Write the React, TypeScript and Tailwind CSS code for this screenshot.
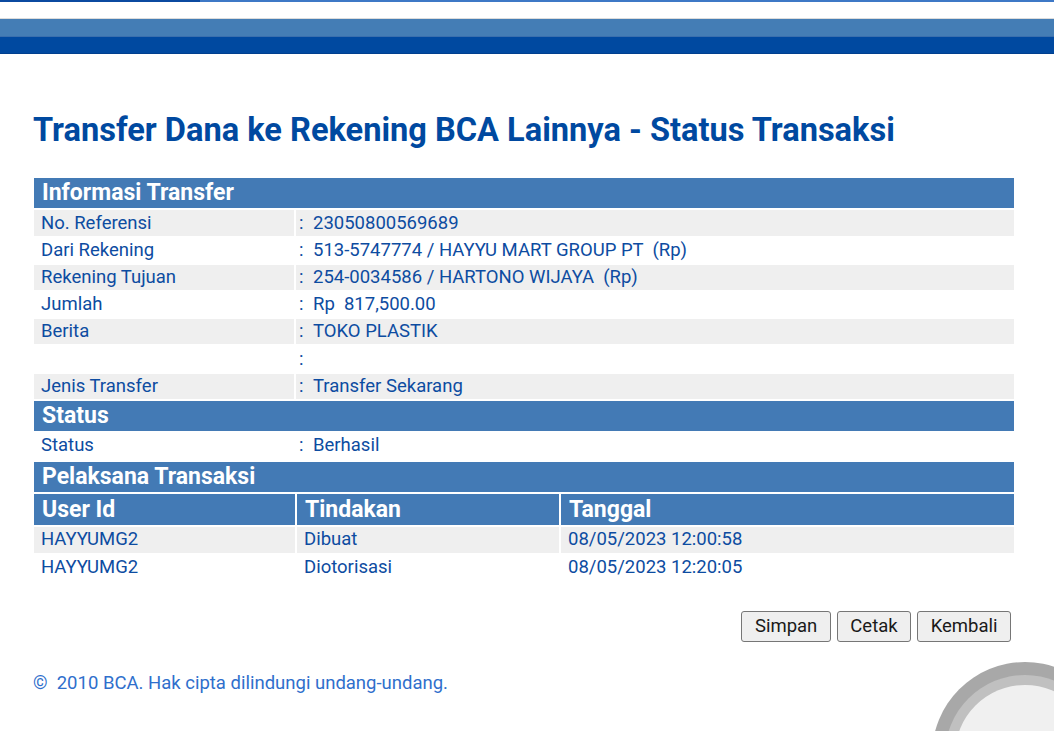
import * as React from 'react';

const infoRows: [string, string, number][] = [
  ['No. Referensi', '23050800569689', 26],
  ['Dari Rekening', '513-5747774 / HAYYU MART GROUP PT  (Rp)', 25],
  ['Rekening Tujuan', '254-0034586 / HARTONO WIJAYA  (Rp)', 25],
  ['Jumlah', 'Rp  817,500.00', 25],
  ['Berita', 'TOKO PLASTIK', 25],
  ['', '', 26],
  ['Jenis Transfer', 'Transfer Sekarang', 25],
];

const pelaksana: [string, string, string][] = [
  ['HAYYUMG2', 'Dibuat', '08/05/2023 12:00:58'],
  ['HAYYUMG2', 'Diotorisasi', '08/05/2023 12:20:05'],
];

function SectionHeader({ title }: { title: string }) {
  return (
    <div className="h-[30px] bg-[#437ab5] pl-2 flex items-center text-[23px] font-bold text-white leading-none">
      {title}
    </div>
  );
}

function InfoRow({ label, value, grey, tall }: { label: string; value: string; grey: boolean; tall?: boolean }) {
  const bg = grey ? 'bg-[#efefef]' : 'bg-white';
  const h = tall ? 'h-[26px]' : 'h-[25px]';
  return (
    <div className="grid grid-cols-[260px_1fr] gap-[2px]">
      <div className={`${bg} ${h} pl-[7px] pt-[2px] flex items-center`}>{label}</div>
      <div className={`${bg} ${h} pl-[3px] pt-[2px] flex items-center whitespace-pre`}>
        <span className="w-[14px]">:</span>
        {value}
      </div>
    </div>
  );
}

export default function App() {
  return (
    <div
      className="relative w-[1054px] h-[731px] overflow-hidden bg-white text-[18.5px] text-[#0d4ca1]"
      style={{ fontFamily: 'Roboto, "Liberation Sans", sans-serif' }}
    >
      {/* top browser line */}
      <div className="flex h-[2px]">
        <div className="w-[200px] bg-[#0b4aa0]" />
        <div className="flex-1 bg-[#3d78c6]" />
      </div>

      {/* header bands */}
      <div className="mt-[16px] h-[1px] bg-[#dcdcdc]" />
      <div className="h-[18px] bg-[#447db5] border-b border-[#3a6fae]" />
      <div className="h-[17px] bg-[#0049a0] border-b border-[#003f8e]" />

      <div className="px-[33px]">
        <h1 className="mt-[60px] text-[32.6px] font-bold text-[#0049a0] leading-none">
          Transfer Dana ke Rekening BCA Lainnya - Status Transaksi
        </h1>

        <div className="mt-[31px] w-[980px] ml-[1px] flex flex-col gap-[2px]">
          <SectionHeader title="Informasi Transfer" />
          {infoRows.map(([l, v, h], i) => (
            <InfoRow key={i} label={l} value={v} grey={i % 2 === 0} tall={h === 26} />
          ))}
          <SectionHeader title="Status" />
          <InfoRow label="Status" value="Berhasil" grey={false} />
          <div className="mt-[2px]">
            <SectionHeader title="Pelaksana Transaksi" />
          </div>
          <div className="grid grid-cols-[261px_262px_1fr] gap-[2px]">
            {['User Id', 'Tindakan', 'Tanggal'].map((h) => (
              <div key={h} className="h-[31px] bg-[#437ab5] pl-2 flex items-center text-[23px] font-bold text-white leading-none">
                {h}
              </div>
            ))}
            {pelaksana.map((r, i) =>
              r.map((c, j) => (
                <div
                  key={`${i}-${j}`}
                  className={`${i % 2 === 0 ? 'bg-[#efefef]' : 'bg-white'} h-[26px] pl-[7px] pt-[1px] flex items-center`}
                >
                  {c}
                </div>
              ))
            )}
          </div>
        </div>

        <div className="mt-[30px] w-[978px] flex justify-end gap-[6px]">
          {['Simpan', 'Cetak', 'Kembali'].map((b) => (
            <button
              key={b}
              className="h-[31px] px-[12.5px] bg-[#efefef] border border-[#767676] rounded-[3px] text-[18.5px] text-[#1a1a1a] leading-none"
            >
              {b}
            </button>
          ))}
        </div>

        <p className="mt-[32px] text-[18.5px] text-[#2f6fcc] whitespace-pre leading-none">©  2010 BCA. Hak cipta dilindungi undang-undang.</p>
      </div>

      {/* decorative circle bottom right */}
      <svg className="absolute left-[932px] top-[662px]" width="186" height="186" viewBox="0 0 186 186">
        <circle cx="93" cy="93" r="93" fill="#a8a8a8" />
        <circle cx="93" cy="93" r="80" fill="#c0c0c0" />
        <circle cx="93" cy="93" r="70" fill="#f0f0f0" />
      </svg>
    </div>
  );
}
